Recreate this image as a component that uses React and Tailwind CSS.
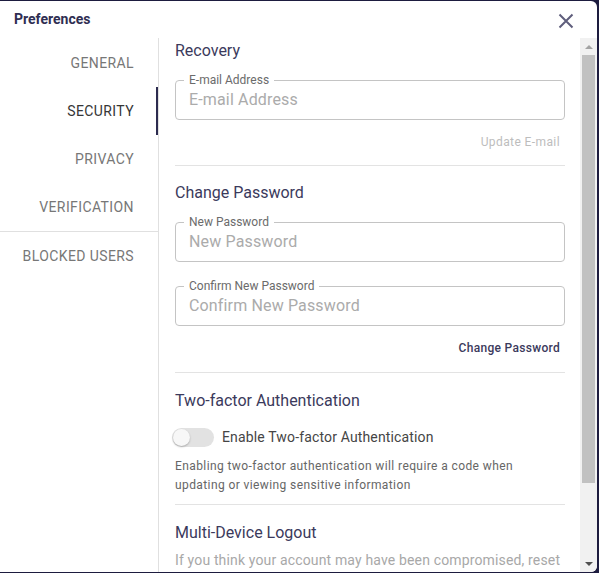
import { useState } from "react";

const tabs = ["General", "Security", "Privacy", "Verification"];

function OutlinedField({ label, className = "" }) {
  return (
    <div
      className={`relative h-[40px] rounded-[4px] border border-[#c4c4c4] flex items-center pl-[13px] ${className}`}
    >
      <span className="absolute left-[8px] -top-[8px] bg-white px-[5px] text-[12px] leading-[14px] text-[#6b6b6b]">
        {label}
      </span>
      <span className="text-[16px] text-[#ababab] tracking-[0.15px]">{label}</span>
    </div>
  );
}

function SectionTitle({ children, className = "" }) {
  return (
    <div className={`text-[16px] leading-[24px] text-[#3b3a5c] ${className}`}>{children}</div>
  );
}

function Divider({ className = "" }) {
  return <div className={`h-px bg-[#e3e3e3] ${className}`} />;
}

function ScrollBar() {
  return (
    <div className="w-[17px] shrink-0 bg-[#f1f1f1] flex flex-col items-center">
      <div className="h-[17px] w-full flex items-center justify-center">
        <div className="w-0 h-0 border-l-[4px] border-r-[4px] border-b-[4px] border-l-transparent border-r-transparent border-b-[#a3a3a3]" />
      </div>
      <div className="w-[13px] h-[428px] bg-[#c1c1c1]" />
      <div className="flex-1" />
      <div className="h-[17px] w-full flex items-center justify-center">
        <div className="w-0 h-0 border-l-[4px] border-r-[4px] border-t-[4px] border-l-transparent border-r-transparent border-t-[#505050]" />
      </div>
    </div>
  );
}

export default function App() {
  const [active, setActive] = useState("Security");
  const [twoFactor, setTwoFactor] = useState(false);

  return (
    <div
      className="w-[599px] h-[573px] bg-[#1d1c3f] pt-px overflow-hidden"
      style={{ fontFamily: "Roboto, 'Liberation Sans', sans-serif" }}
    >
      <div className="w-[597px] h-[571px] bg-white rounded-r-[6px] flex flex-col overflow-hidden">
        {/* header */}
        <div className="h-[37px] shrink-0 flex items-center justify-between pl-[14px] pr-[23px]">
          <span className="text-[14px] font-bold text-[#2f2e52]">Preferences</span>
          <svg width="16" height="16" viewBox="0 0 16 16" className="mt-[2px]">
            <path d="M1.5 1.5L14.5 14.5M14.5 1.5L1.5 14.5" stroke="#5f5e7c" strokeWidth="2" />
          </svg>
        </div>

        <div className="flex flex-1 min-h-0">
          {/* tabs */}
          <div className="w-[159px] shrink-0 border-r border-[#e0e0e0] flex flex-col pt-px">
            {tabs.map((t) => (
              <button
                key={t}
                onClick={() => setActive(t)}
                className={`relative h-[48px] flex items-center justify-end pr-[24px] text-[14px] uppercase tracking-[0.4px] ${
                  active === t ? "text-[#363636]" : "text-[#777777]"
                }`}
              >
                {t}
                {active === t && (
                  <span className="absolute right-0 top-0 bottom-0 w-[2px] bg-[#2c2b4f]" />
                )}
              </button>
            ))}
            <div className="h-px bg-[#e0e0e0]" />
            <button className="h-[48px] flex items-center justify-end pr-[24px] text-[14px] uppercase tracking-[0.4px] text-[#777777]">
              Blocked Users
            </button>
          </div>

          {/* security panel */}
          <div className="flex-1 min-w-0 overflow-hidden pt-px pl-[16px] pr-[15px]">
            <SectionTitle>Recovery</SectionTitle>
            <OutlinedField label="E-mail Address" className="mt-[17px]" />
            <div className="mt-[13px] h-[18px] flex items-center justify-end pr-[5px] text-[12px] tracking-[0.4px] text-[#bdbdbd]">
              Update E-mail
            </div>
            <Divider className="mt-[14px]" />

            <SectionTitle className="mt-[15px]">Change Password</SectionTitle>
            <OutlinedField label="New Password" className="mt-[17px]" />
            <OutlinedField label="Confirm New Password" className="mt-[24px]" />
            <div className="mt-[13px] h-[18px] flex items-center justify-end pr-[5px] text-[12px] font-medium tracking-[0.3px] text-[#3b3a5c]">
              Change Password
            </div>
            <Divider className="mt-[15px]" />

            <SectionTitle className="mt-[16px]">Two-factor Authentication</SectionTitle>
            <div className="mt-[12px] h-[24px] flex items-center -ml-[3px]">
              <button
                onClick={() => setTwoFactor(!twoFactor)}
                className="relative w-[42px] h-[19px] rounded-full bg-[#e2e2e2]"
              >
                <span
                  className={`absolute top-[1px] w-[17px] h-[17px] rounded-full bg-[#f7f7f7] shadow-[0_1px_2px_rgba(0,0,0,0.25)] ${
                    twoFactor ? "left-[24px]" : "left-[1px]"
                  }`}
                />
              </button>
              <span className="ml-[8px] text-[14px] tracking-[0.15px] text-[#454545]">
                Enable Two-factor Authentication
              </span>
            </div>
            <p className="mt-[8px] text-[12px] leading-[19px] tracking-[0.4px] text-[#666666] pr-[40px]">
              Enabling two-factor authentication will require a code when updating or viewing
              sensitive information
            </p>
            <Divider className="mt-[9px]" />

            <SectionTitle className="mt-[16px]">Multi-Device Logout</SectionTitle>
            <p className="mt-[5px] text-[14px] leading-[20px] tracking-[0.15px] text-[#a8a8a8] whitespace-nowrap">
              If you think your account may have been compromised, reset
            </p>
          </div>

          <ScrollBar />
        </div>
      </div>
    </div>
  );
}
